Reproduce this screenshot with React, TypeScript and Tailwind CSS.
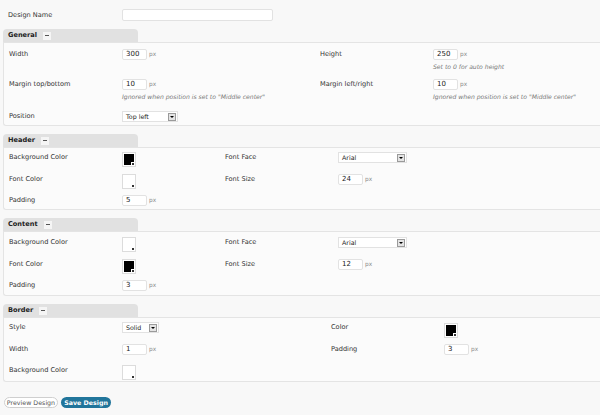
import React from "react";

function Label({ children }: { children: React.ReactNode }) {
  return <div className="h-[11px] flex items-center text-[6.6px] text-[#333]">{children}</div>;
}

function Num({ value, hint }: { value: string; hint?: string }) {
  return (
    <div className="flex flex-col">
      <div className="flex items-center">
        <div className="w-[25px] h-[11px] bg-white border border-[#e2e2e2] rounded-[2px] pl-[3px] flex items-center text-[7px] text-[#222]">
          {value}
        </div>
        <span className="ml-[2px] text-[5.8px] text-[#888]">px</span>
      </div>
      {hint && <div className="mt-[2px] text-[6.1px] italic text-[#777]">{hint}</div>}
    </div>
  );
}

function Swatch({ dark }: { dark?: boolean }) {
  return (
    <div className="relative w-[14px] h-[15px] bg-white border border-[#dcdcdc] p-[1px]">
      <div className={dark ? "w-full h-full bg-black" : "w-full h-full bg-white"} />
      <div className="absolute right-0 bottom-0 w-[4px] h-[4px] bg-white flex items-center justify-center">
        <div className="w-[2px] h-[2px] bg-[#333]" />
      </div>
    </div>
  );
}

function Select({ value, w }: { value: string; w: string }) {
  return (
    <div className={`${w} h-[11px] bg-white border border-[#e2e2e2] flex items-center justify-between pl-[3px] pr-[1px] text-[6.3px] text-[#222]`}>
      <span>{value}</span>
      <div className="w-[8px] h-[8px] bg-[#e4e4e4] border border-[#9a9a9a] flex items-center justify-center">
        <div className="w-0 h-0 border-l-[2px] border-r-[2px] border-t-[2px] border-l-transparent border-r-transparent border-t-black" />
      </div>
    </div>
  );
}

function Section({ title, children }: { title: string; children: React.ReactNode }) {
  return (
    <div className="ml-[3px]">
      <div className="w-[135px] h-[13px] bg-[#e1e1e1] rounded-t-[4px] flex items-center pl-[5px] gap-[6px]">
        <span className="text-[6.6px] font-bold text-[#222]">{title}</span>
        <span className="w-[8px] h-[8px] bg-[#f5f5f5] flex items-center justify-center">
          <span className="w-[4px] h-[1px] bg-[#555]" />
        </span>
      </div>
      <div className="border border-r-0 border-[#e4e4e4] rounded-bl-[3px] bg-[#fbfbfb] pl-[5px]">{children}</div>
    </div>
  );
}

export default function App() {
  return (
    <div className="w-[600px] h-[415px] bg-[#f8f8f8] pt-[9px] overflow-hidden" style={{ fontFamily: '"DejaVu Sans", Verdana, sans-serif' }}>
      <div className="flex items-center pl-[8px] h-[12px]">
        <div className="w-[114px] text-[6.6px] text-[#333] pt-[1px]">Design Name</div>
        <div className="w-[151px] h-[12px] bg-white border border-[#e2e2e2] rounded-[2px]" />
      </div>

      <div className="mt-[8px] flex flex-col gap-[8px]">
        <Section title="General">
          <div className="pt-[6px] pb-[3px]">
            <div className="grid grid-cols-[113px_198px_113px_1fr] h-[30px]">
              <Label>Width</Label>
              <Num value="300" />
              <Label>Height</Label>
              <Num value="250" hint="Set to 0 for auto height" />
            </div>
            <div className="grid grid-cols-[113px_198px_113px_1fr] h-[32px]">
              <Label>Margin top/bottom</Label>
              <Num value="10" hint={'Ignored when position is set to "Middle center"'} />
              <Label>Margin left/right</Label>
              <Num value="10" hint={'Ignored when position is set to "Middle center"'} />
            </div>
            <div className="grid grid-cols-[113px_1fr] h-[11px]">
              <Label>Position</Label>
              <Select value="Top left" w="w-[56px]" />
            </div>
          </div>
        </Section>

        <Section title="Header">
          <div className="pt-[4px] pb-[3px]">
            <div className="grid grid-cols-[113px_103px_113px_1fr] h-[22px]">
              <Label>Background Color</Label>
              <Swatch dark />
              <Label>Font Face</Label>
              <Select value="Arial" w="w-[69px]" />
            </div>
            <div className="grid grid-cols-[113px_103px_113px_1fr] h-[21px]">
              <Label>Font Color</Label>
              <Swatch />
              <Label>Font Size</Label>
              <Num value="24" />
            </div>
            <div className="grid grid-cols-[113px_1fr] h-[11px]">
              <Label>Padding</Label>
              <Num value="5" />
            </div>
          </div>
        </Section>

        <Section title="Content">
          <div className="pt-[5px] pb-[4px]">
            <div className="grid grid-cols-[113px_103px_113px_1fr] h-[22px]">
              <Label>Background Color</Label>
              <Swatch />
              <Label>Font Face</Label>
              <Select value="Arial" w="w-[69px]" />
            </div>
            <div className="grid grid-cols-[113px_103px_113px_1fr] h-[21px]">
              <Label>Font Color</Label>
              <Swatch dark />
              <Label>Font Size</Label>
              <Num value="12" />
            </div>
            <div className="grid grid-cols-[113px_1fr] h-[11px]">
              <Label>Padding</Label>
              <Num value="3" />
            </div>
          </div>
        </Section>

        <Section title="Border">
          <div className="pt-[4px] pb-[1px]">
            <div className="grid grid-cols-[113px_209px_113px_1fr] h-[22px]">
              <Label>Style</Label>
              <Select value="Solid" w="w-[37px]" />
              <Label>Color</Label>
              <div className="mt-[1px]">
                <Swatch dark />
              </div>
            </div>
            <div className="grid grid-cols-[113px_209px_113px_1fr] h-[21px]">
              <Label>Width</Label>
              <Num value="1" />
              <Label>Padding</Label>
              <Num value="3" />
            </div>
            <div className="grid grid-cols-[113px_1fr] h-[15px]">
              <Label>Background Color</Label>
              <Swatch />
            </div>
          </div>
        </Section>
      </div>

      <div className="mt-[15px] ml-[4px] flex gap-[3px]">
        <button className="w-[54px] h-[11px] rounded-full bg-white border border-[#cfcfcf] text-[6.3px] text-[#555] flex items-center justify-center">
          Preview Design
        </button>
        <button className="w-[50px] h-[11px] rounded-full bg-[#21759b] text-[6.3px] font-bold text-white flex items-center justify-center">
          Save Design
        </button>
      </div>
    </div>
  );
}
